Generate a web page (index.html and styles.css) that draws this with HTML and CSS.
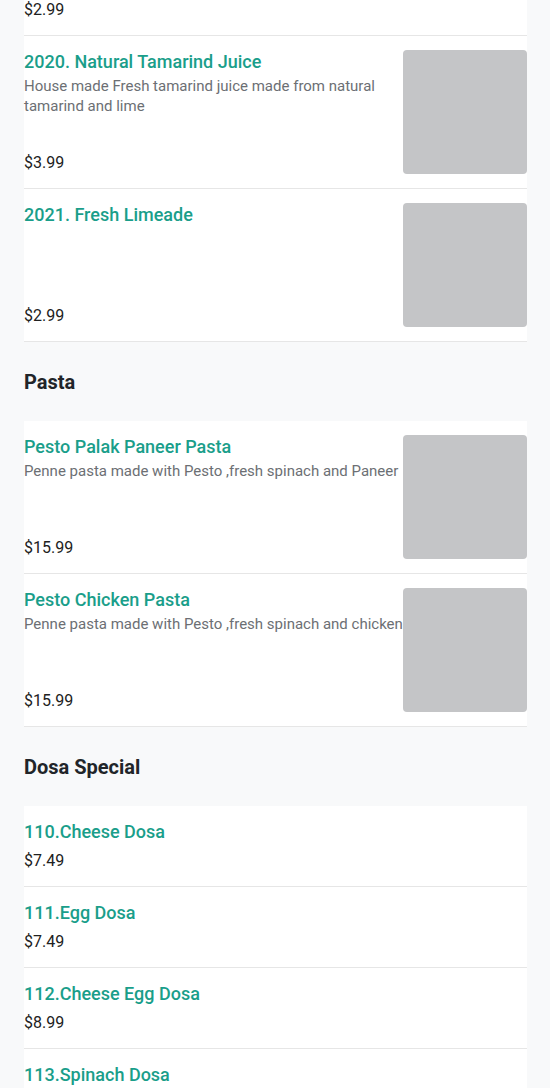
FILE: index.html
```html
<!DOCTYPE html>
<html lang="en">
<head>
    <meta charset="UTF-8">
    <title>Menu</title>
    <link rel="stylesheet" href="styles.css">
</head>
<body>
    <div class="menu">
        <div class="items">
            <div class="item partial">
                <div class="item-info">
                    <div class="item-price">$2.99</div>
                </div>
            </div>
            <div class="item">
                <div class="item-info">
                    <div class="item-name">2020. Natural Tamarind Juice</div>
                    <div class="item-desc">House made Fresh tamarind juice made from natural tamarind and lime</div>
                    <div class="item-price">$3.99</div>
                </div>
                <div class="item-photo"></div>
            </div>
            <div class="item">
                <div class="item-info">
                    <div class="item-name">2021. Fresh Limeade</div>
                    <div class="item-price">$2.99</div>
                </div>
                <div class="item-photo"></div>
            </div>
        </div>

        <div class="category-title">Pasta</div>
        <div class="items">
            <div class="item">
                <div class="item-info">
                    <div class="item-name">Pesto Palak Paneer Pasta</div>
                    <div class="item-desc">Penne pasta made with Pesto ,fresh spinach and Paneer</div>
                    <div class="item-price">$15.99</div>
                </div>
                <div class="item-photo"></div>
            </div>
            <div class="item">
                <div class="item-info">
                    <div class="item-name">Pesto Chicken Pasta</div>
                    <div class="item-desc">Penne pasta made with Pesto ,fresh spinach and chicken</div>
                    <div class="item-price">$15.99</div>
                </div>
                <div class="item-photo"></div>
            </div>
        </div>

        <div class="category-title">Dosa Special</div>
        <div class="items">
            <div class="item plain">
                <div class="item-info">
                    <div class="item-name">110.Cheese Dosa</div>
                    <div class="item-price">$7.49</div>
                </div>
            </div>
            <div class="item plain">
                <div class="item-info">
                    <div class="item-name">111.Egg Dosa</div>
                    <div class="item-price">$7.49</div>
                </div>
            </div>
            <div class="item plain">
                <div class="item-info">
                    <div class="item-name">112.Cheese Egg Dosa</div>
                    <div class="item-price">$8.99</div>
                </div>
            </div>
            <div class="item plain">
                <div class="item-info">
                    <div class="item-name">113.Spinach Dosa</div>
                    <div class="item-price">$7.99</div>
                </div>
            </div>
        </div>
    </div>
</body>
</html>
```

FILE: styles.css
```css
body {
    font-family: Roboto, "Liberation Sans", sans-serif;
    background-color: #f8f9fa;
    color: #212121;
    margin: 0;
}
.menu {
    padding: 0 23px 0 24px;
}
.category-title {
    font-size: 20px;
    line-height: 24px;
    font-weight: bold;
    color: #212529;
    padding: 28px 0 27px;
}
.items {
    background-color: #fff;
}
.item {
    display: flex;
    padding: 14px 0;
    border-bottom: 1px solid #e6e6e6;
}
.item.partial {
    padding-top: 0;
}
.partial .item-price {
    margin-top: -1px;
}
.item-info {
    flex: 1;
    min-width: 0;
    display: flex;
    flex-direction: column;
}
.item-name {
    font-size: 18px;
    line-height: 24px;
    font-weight: 500;
    color: #1a9e8a;
}
.item-desc {
    font-size: 15px;
    line-height: 20px;
    color: #6c6f74;
    margin-top: 2px;
}
.item-price {
    font-size: 16px;
    line-height: 22px;
    margin-top: auto;
}
.plain .item-price {
    margin-top: 6px;
}
.item-photo {
    width: 124px;
    height: 124px;
    flex-shrink: 0;
    background-color: #c4c5c7;
    border-radius: 4px;
}
```
